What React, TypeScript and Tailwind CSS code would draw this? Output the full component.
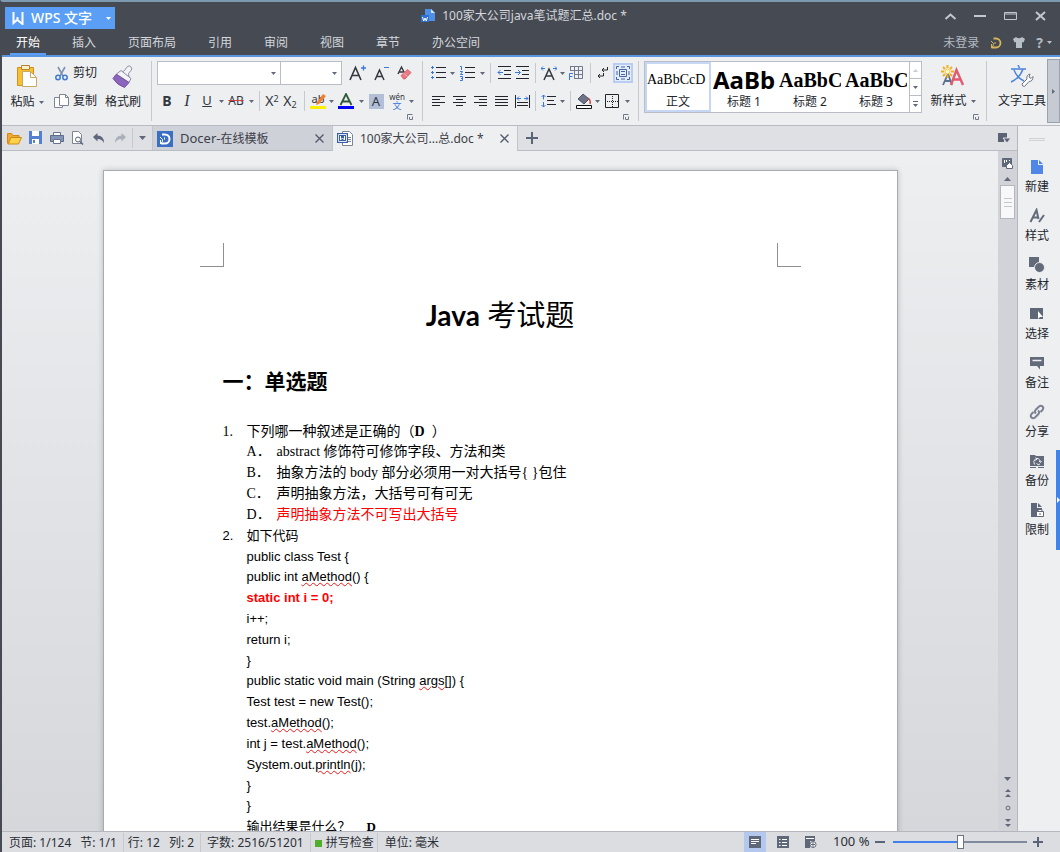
import React from 'react';
import clsx from 'clsx';

const MENU = ['开始', '插入', '页面布局', '引用', '审阅', '视图', '章节', '办公空间'];

const STYLES = [
    { label: '正文', sample: 'AaBbCcD', className: 'font-["Liberation_Serif",serif] text-sm' },
    { label: '标题 1', sample: 'AaBb', className: 'font-["Noto_Sans",sans-serif] text-2xl leading-none font-bold' },
    { label: '标题 2', sample: 'AaBbC', className: 'font-["Liberation_Serif",serif] text-xl leading-none font-bold' },
    { label: '标题 3', sample: 'AaBbC', className: 'font-["Liberation_Serif",serif] text-xl leading-none font-bold' },
];

const OPTIONS = [
    { key: 'A', text: 'abstract 修饰符可修饰字段、方法和类' },
    { key: 'B', text: '抽象方法的 body 部分必须用一对大括号{ }包住' },
    { key: 'C', text: '声明抽象方法，大括号可有可无' },
    { key: 'D', text: '声明抽象方法不可写出大括号', answer: true },
];

const Caret = ({ className = 'text-[#60687a]' }: { className?: string }) => (
    <svg className={clsx('shrink-0', className)} width="5" height="3" viewBox="0 0 5 3" fill="currentColor">
        <path d="M0 0h5L2.5 3z" />
    </svg>
);

const Svg = ({ w = 16, h = 16, children }: { w?: number; h?: number; children: React.ReactNode }) => (
    <svg className="shrink-0" width={w} height={h} viewBox={`0 0 ${w} ${h}`} fill="none" stroke="#3c4048">
        {children}
    </svg>
);

type ToolProps = { label: string; width?: string; children: React.ReactNode };

const Tool = ({ label, width = 'w-[18px]', children }: ToolProps) => (
    <button aria-label={label} className={clsx('flex h-6 shrink-0 items-center justify-center', width)}>
        {children}
    </button>
);

const More = ({ label }: { label: string }) => (
    <button aria-label={`${label}选项`} className="flex h-6 w-2 shrink-0 items-center justify-center">
        <Caret />
    </button>
);

const Sep = ({ className = 'mx-1' }: { className?: string }) => (
    <div className={clsx('h-5 w-px shrink-0 bg-[#c6c9cf]', className)} />
);

const GroupSep = () => <div className="mt-1 h-[60px] w-px shrink-0 bg-[#c6c9cf]" />;

const Launcher = ({ label }: { label: string }) => (
    <button aria-label={label} className="flex h-2 w-2 items-center justify-center self-end">
        <Svg w={6} h={6}>
            <path d="M.5 5.5v-5h5M2.5 3v2.5H5.5V2.5" stroke="#70788a" />
        </Svg>
    </button>
);

const Squiggle = ({ children }: { children: React.ReactNode }) => (
    <span className="underline decoration-[#f01818] decoration-wavy decoration-1 underline-offset-1">{children}</span>
);

/* horizontal text lines: [x1, x2] per row */
const Lines = ({ rows, step = 4, top = 2 }: { rows: number[][]; step?: number; top?: number }) => (
    <>
        {rows.map(([a, b], i) => (
            <path key={i} d={`M${a} ${top + i * step + 0.5}H${b}`} stroke="#22262c" />
        ))}
    </>
);

const Header = () => (
    <header className="border-b-2 border-[#5a95e0] bg-[#464a52] text-[#d4d7dc]">
        <div className="grid h-7 grid-cols-[1fr_auto_1fr] items-center">
            <div className="flex items-center pl-[3px] pt-1">
                <button className="flex h-[22px] w-[110px] items-center bg-[#5a9ff5] pl-[7px] font-medium text-white">
                    <Svg w={12} h={13}>
                        <path d="M1.5 0V11L5.5 7.5V5M5.5 8L10.5 12V0" stroke="#fff" strokeWidth="2" />
                    </Svg>
                    <span className="ml-[7px] text-sm">WPS 文字</span>
                    <span className="ml-auto mr-1"><Caret className="text-white" /></span>
                </button>
            </div>
            <div className="mr-3.5 flex items-center gap-[7px]">
                <Svg w={14} h={14}>
                    <path d="M4 0h6l4 4v8H4z" fill="#4e8fe8" stroke="none" />
                    <path d="M10 0l4 4h-4z" fill="#cfe2ff" stroke="none" />
                    <path d="M0 6h8v7H0z" fill="#2f6fd0" stroke="none" />
                    <path d="M1.5 8l1.2 4L4 9l1.3 3 1.2-4" stroke="#fff" />
                </Svg>
                <h1 className="text-xs">100家大公司java笔试题汇总.doc *</h1>
            </div>
            <div className="flex items-center justify-end gap-[17px] pr-[13px]">
                <button aria-label="收起"><Svg w={13} h={13}><path d="M1.5 9L6.5 4.5L11.5 9" stroke="#c3c8cf" strokeWidth="2" /></Svg></button>
                <button aria-label="最小化"><Svg w={13} h={13}><path d="M0 6h12" stroke="#c3c8cf" strokeWidth="2" /></Svg></button>
                <button aria-label="最大化"><Svg w={13} h={13}><path d="M.5 2.5h12v7H.5zM0 4h13" stroke="#c3c8cf" /></Svg></button>
                <button aria-label="关闭"><Svg w={13} h={13}><path d="M2 2l9 8M11 2L2 10" stroke="#c3c8cf" strokeWidth="2" /></Svg></button>
            </div>
        </div>
        <div className="flex h-[25px] items-stretch justify-between pl-[14px] pr-2 text-xs">
            <nav className="flex gap-8">
                {MENU.map((item, i) => (
                    <button key={item} className={clsx('relative', i === 0 && 'text-white')}>
                        {item}
                        {i === 0 && <span className="absolute -inset-x-1.5 bottom-0 h-0.5 bg-[#5a9ff5]" />}
                    </button>
                ))}
            </nav>
            <div className="flex items-center gap-[11px] text-[#b4bac2]">
                <button>未登录</button>
                <button aria-label="稻壳"><Svg w={12} h={12}>
                    <path d="M3.500 1.500H6a4.500 4.500 0 010 9H1.500" stroke="#d8b45a" strokeWidth="1.8" />
                    <path d="M1 4l2.500 2.500L3 9L1 11M1.500 7v3M5 5v2" stroke="#d8b45a" />
                </Svg></button>
                <button aria-label="皮肤"><Svg w={12} h={11}>
                    <path d="M0 2l3-2q3 2.5 6 0l3 2-1.500 3.500-1.500-.5v6H3V5l-1.500.5z" fill="#b9bfc6" stroke="none" />
                </Svg></button>
                <button aria-label="帮助" className="flex items-center gap-1 text-sm font-bold">?<Caret className="text-[#b9bfc6]" /></button>
            </div>
        </div>
    </header>
);

const Clipboard = () => (
    <div className="flex w-[149px] shrink-0 pl-1">
        <button className="flex w-[42px] flex-col items-center pt-[7px]">
            <Svg w={22} h={24}>
                <path d="M1.500 3.500h16v18h-16z" fill="#f6c02f" stroke="#d09020" />
                <path d="M5.500 1.500h8v4h-8z" fill="#fff0c0" stroke="#b38236" />
                <path d="M6.500 7.500h8l6 6v9h-14z" fill="#fff" stroke="#c9a860" />
                <path d="M14.500 7.500v6h6" stroke="#c9a860" />
            </Svg>
            <span className="mt-1.5 flex items-center gap-1 leading-4">粘贴<Caret /></span>
        </button>
        <div className="ml-1.5 flex w-11 flex-col gap-1 pt-1">
            <button className="flex h-6 items-center gap-1">
                <Svg w={15} h={15}>
                    <path d="M4 1l5 9M11 1L6 10" stroke="#7d92b4" strokeWidth="1.6" />
                    <circle cx="4" cy="11.500" r="2.200" stroke="#3c7bd0" strokeWidth="1.500" />
                    <circle cx="11" cy="11.500" r="2.200" stroke="#3c7bd0" strokeWidth="1.500" />
                </Svg>
                <span className="shrink-0">剪切</span>
            </button>
            <button className="flex h-6 items-center gap-1">
                <Svg w={15} h={15}>
                    <path d="M.500 3.500h8v10h-8z" fill="#fff" stroke="#7d8494" />
                    <path d="M5.500.500h6l3 3v8h-9z" fill="#fff" stroke="#7d8494" />
                    <path d="M11.500.500v3h3" stroke="#7d8494" />
                </Svg>
                <span className="shrink-0">复制</span>
            </button>
        </div>
        <button className="flex w-[50px] flex-col items-center pt-2">
            <Svg w={22} h={23}>
                <path d="M10 7l2.500-1.500 3-4q2-1.500 3.500.500t0 3.500l-2.500 3 .500 4z" fill="#f4f4f8" stroke="#8d8fa0" />
                <path d="M4.500 9l4.500-3.500 10 8-2 4z" fill="#f4f4f8" stroke="#8f88a8" />
                <path d="M4 9.500l13 8-4.500 5Q5 20 1 13.500z" fill="#8c66bc" stroke="#7450a4" />
            </Svg>
            <span className="mt-1.5 whitespace-nowrap leading-4">格式刷</span>
        </button>
    </div>
);

const FontGroup = () => (
    <div className="flex w-[270px] shrink-0 flex-col pl-[5px] pr-2 pt-1">
        <div className="flex h-6 items-center">
            <div className="relative h-6 w-[124px] shrink-0 border border-[#b9bdc6] bg-white">
                <select aria-label="字体" className="h-full w-full appearance-none"><option></option></select>
                <span className="pointer-events-none absolute right-1 top-2.5"><Caret /></span>
            </div>
            <div className="relative mr-1 h-6 w-[61px] shrink-0 border border-l-0 border-[#b9bdc6] bg-white">
                <select aria-label="字号" className="h-full w-full appearance-none"><option></option></select>
                <span className="pointer-events-none absolute right-1 top-2.5"><Caret /></span>
            </div>
            <Tool label="增大字号" width="w-6"><Svg w={18} h={18}>
                <path d="M1 16L6.500 3.500L12 16M3 11.500h7" stroke="#33373e" strokeWidth="1.600" />
                <path d="M12 4h5M14.500 1.500v5" stroke="#3b78dc" strokeWidth="1.300" />
            </Svg></Tool>
            <Tool label="减小字号" width="w-6"><Svg w={16} h={18}>
                <path d="M1 16L5.500 6L10 16M2.500 12.500h6" stroke="#33373e" strokeWidth="1.500" />
                <path d="M10 3.500h5" stroke="#3b78dc" />
            </Svg></Tool>
            <Tool label="清除格式" width="w-5"><Svg w={15} h={16}>
                <path d="M1 9L4.500 2L8 9M2 7h5" stroke="#33373e" strokeWidth="1.400" />
                <path d="M4 10.500l6.500-6 3.500 3-6 6.500h-1.500z" fill="#e87882" stroke="#dc6670" />
                <path d="M6.500 8l4 3.500" stroke="#f4b4ba" />
            </Svg></Tool>
        </div>
        <div className="mt-1 flex h-6 items-center text-[#33373e]">
            <Tool label="加粗" width="w-5"><b className="text-sm">B</b></Tool>
            <Tool label="倾斜" width="w-5"><i className="font-['Liberation_Serif',serif] text-base">I</i></Tool>
            <Tool label="下划线" width="w-5"><span className="text-[13px] underline">U</span></Tool>
            <More label="下划线" />
            <Tool label="删除线" width="w-[22px]"><span className="text-xs line-through decoration-[#d04040] decoration-1">AB</span></Tool>
            <More label="删除线" />
            <Sep />
            <Tool label="上标" width="w-4"><span className="text-sm">X<sup className="text-[9px]">2</sup></span></Tool>
            <Tool label="下标" width="w-5"><span className="text-sm">X<sub className="text-[9px]">2</sub></span></Tool>
            <Sep />
            <Tool label="突出显示"><span className="relative">
                <span className="block h-4 w-4 border-b-[3px] border-[#ffee00] text-[11px] leading-3">ab</span>
                <svg className="absolute left-1 top-0" width="12" height="13" viewBox="0 0 12 13">
                    <path d="M9 1l3 2-7 8-3 1 1-3z" fill="#f08030" />
                </svg>
            </span></Tool>
            <More label="突出显示" />
            <Tool label="字体颜色" width="w-[22px]"><Svg w={16} h={16}>
                <path d="M2.500 12L8 1L13.500 12M4.500 8.500h7" stroke="#2f5a3a" strokeWidth="1.800" />
                <path d="M0 14.500h16" stroke="#0000ff" strokeWidth="3" />
            </Svg></Tool>
            <More label="字体颜色" />
            <Tool label="字符底纹" width="w-[22px]"><span className="h-[15px] w-[15px] bg-[#b3bfd6] text-[13px] leading-[15px]">A</span></Tool>
            <Tool label="拼音指南" width="w-5">
                <span className="flex flex-col items-center">
                    <span className="text-[8px] leading-[8px]">wén</span>
                    <span className="text-[9px] leading-[9px] text-[#3b78dc]">文</span>
                </span>
            </Tool>
            <More label="拼音指南" />
        </div>
        <Launcher label="字体设置" />
    </div>
);

const ParagraphGroup = () => (
    <div className="flex w-[215px] shrink-0 flex-col pl-[5px] pr-2 pt-1">
        <div className="flex h-6 items-center">
            <Tool label="项目符号" width="w-5"><Svg w={15} h={14}>
                <Lines rows={[[5, 15], [5, 15], [5, 15]]} step={5} top={1} />
                <path d="M0 1.500h3M0 6.500h3M0 11.500h3M1.500 0v3M1.500 5v3M1.500 10v3" stroke="#3b78dc" />
            </Svg></Tool>
            <More label="项目符号" />
            <Tool label="编号" width="w-[22px]"><Svg w={15} h={16}>
                <Lines rows={[[5, 15], [5, 15], [5, 15]]} step={5} top={2} />
                <path d="M0 1.500h1.500V5M0 6.500h2.500L.500 9.500h2.500M0 11.500h2.500v4H0M1 13.500h1.500" stroke="#3b78dc" />
            </Svg></Tool>
            <More label="编号" />
            <Sep />
            <Tool label="减少缩进"><Svg w={14} h={14}>
                <Lines rows={[[1, 14], [7, 14], [7, 14], [1, 14]]} top={0} />
                <path d="M6 6.500H1M3.500 4L1 6.500L3.500 9" stroke="#3b78dc" />
            </Svg></Tool>
            <Tool label="增加缩进"><Svg w={14} h={14}>
                <Lines rows={[[1, 14], [7, 14], [7, 14], [1, 14]]} top={0} />
                <path d="M0 6.500h5M3 4l2.500 2.500L3 9" stroke="#3b78dc" />
            </Svg></Tool>
            <Sep />
            <Tool label="中文版式"><Svg w={16} h={16}>
                <path d="M3 15L8 4L13 15M5 11h6" stroke="#33373e" strokeWidth="1.500" />
                <path d="M0 3.500h4M2 1.500L0 3.500L2 5.500M12 3.500h4M14 1.500l2 2l-2 2" stroke="#3b78dc" />
            </Svg></Tool>
            <More label="中文版式" />
            <Tool label="插入表格" width="w-5"><Svg w={14} h={14}>
                <path d="M1 .500h12.500v12H5M1 4.500h12.500M5 8.500h8.500M1.500 0v5M5.500 0v13M9.500 0v13" stroke="#737a8c" />
                <path d="M.500 14V7.500H4M.500 10.500h3" stroke="#3b78dc" />
            </Svg></Tool>
            <Sep />
            <Tool label="显示段落标记" width="w-4"><Svg w={12} h={14}>
                <path d="M10.500 1v3H5M7 2L5 4l2 2M6.500 7v3H1M3 8l-2 2l2 2" stroke="#22262c" />
            </Svg></Tool>
            <button aria-label="段落布局" className="ml-0.5 flex h-5 w-5 shrink-0 items-center justify-center border-2 border-[#b9cdf2] bg-[#e4ecfa]">
                <Svg w={14} h={14}>
                    <path d="M3.500 3.500h7v7h-7zM.500 3V.500H3M11 .500h2.500V3M13.500 11v2.500H11M3 13.500H.500V11M5 5.500h4M5 8.500h4M5 1h4M5 13h4M1 5v4M13 5v4" stroke="#41639f" />
                </Svg>
            </button>
        </div>
        <div className="mt-1 flex h-6 items-center">
            <Tool label="左对齐" width="w-[21px]"><Svg w={13} h={12}><Lines rows={[[0, 13], [0, 8], [0, 13], [0, 8]]} step={3} top={1} /></Svg></Tool>
            <Tool label="居中" width="w-[21px]"><Svg w={13} h={12}><Lines rows={[[0, 13], [3, 10], [0, 13], [3, 10]]} step={3} top={1} /></Svg></Tool>
            <Tool label="右对齐" width="w-[21px]"><Svg w={13} h={12}><Lines rows={[[0, 13], [5, 13], [0, 13], [5, 13]]} step={3} top={1} /></Svg></Tool>
            <Tool label="两端对齐" width="w-[21px]"><Svg w={13} h={12}><Lines rows={[[0, 13], [0, 13], [0, 13], [0, 13]]} step={3} top={1} /></Svg></Tool>
            <Tool label="分散对齐" width="w-[21px]"><Svg w={15} h={13}>
                <path d="M.500 0v13M14.500 0v13M2 7.500h11M2 10.500h11" stroke="#22262c" />
                <path d="M2 3.500h4M4 1.500L2 3.500L4 5.500M9 3.500h4M11 1.500l2 2l-2 2" stroke="#3b78dc" />
            </Svg></Tool>
            <Sep className="ml-0.5 mr-1" />
            <Tool label="行距"><Svg w={16} h={14}>
                <Lines rows={[[6, 15], [6, 13], [6, 15]]} step={4} />
                <path d="M2.500 1v4.500M.500 3l2-2l2 2M2.500 8v5M.500 11l2 2l2-2" stroke="#3b78dc" />
            </Svg></Tool>
            <More label="行距" />
            <Sep />
            <Tool label="底纹颜色"><Svg w={16} h={16}>
                <path d="M2 6l5-5 6 5-5 5z" fill="#6c7486" stroke="#4c5466" />
                <path d="M12 5q3 2 2 6" stroke="#c84848" strokeWidth="1.500" />
                <path d="M.500 12.500h15v3H.500z" fill="#fff" stroke="#111" />
            </Svg></Tool>
            <More label="底纹颜色" />
            <Tool label="边框" width="w-[22px]"><Svg w={14} h={14}>
                <path d="M.500 .500h13v13H.500z" stroke="#22262c" />
                <path d="M7.500 2v11M2 7.500h11" stroke="#22262c" strokeDasharray="1 1" />
            </Svg></Tool>
            <More label="边框" />
        </div>
        <Launcher label="段落设置" />
    </div>
);

const StyleGallery = () => (
    <div className="ml-[5px] mt-1 flex h-[52px] shrink-0 border border-[#b9bdc6] bg-white">
        {STYLES.map((style, i) => (
            <button
                key={style.label}
                className={clsx('flex w-[66px] flex-col items-center overflow-hidden border-2', i === 0 ? 'border-[#c5d7f5]' : 'border-transparent')}
            >
                <span className={clsx('flex h-[30px] w-full items-center overflow-hidden whitespace-nowrap pt-0.5 text-black', style.className)}>{style.sample}</span>
                <span className="leading-4">{style.label}</span>
            </button>
        ))}
        <div className="flex w-3 flex-col divide-y divide-[#b9bdc6] border-l border-[#b9bdc6]">
            <button aria-label="向上" className="flex flex-1 items-center justify-center"><span className="rotate-180"><Caret className="text-[#c8ccd4]" /></span></button>
            <button aria-label="向下" className="flex flex-1 items-center justify-center"><Caret /></button>
            <button aria-label="全部样式" className="flex flex-1 flex-col items-center justify-center gap-0.5"><span className="h-px w-[5px] bg-[#60687a]" /><Caret /></button>
        </div>
    </div>
);

const Ribbon = () => (
    <div className="flex h-[69px] overflow-hidden border-b border-[#b9bcc4] bg-[#eeeff1] text-xs">
        <Clipboard />
        <GroupSep />
        <FontGroup />
        <GroupSep />
        <ParagraphGroup />
        <GroupSep />
        <StyleGallery />
        <div className="flex w-[64px] shrink-0 flex-col pl-1 pr-1.5 pt-2">
            <button className="flex flex-col items-center">
                <Svg w={24} h={22}>
                    <path d="M2 20L7 9L11 20M4 16h6" stroke="#5a7090" strokeWidth="1.800" />
                    <path d="M10 20L15.500 5L22 20M12.500 14.500h7" stroke="#e25a70" strokeWidth="2.400" />
                    <path d="M6.500 0v3M6.500 10v3M0 6.500h3M10 6.500h3M2 2l2 2M9 9l2 2M11 2L9 4M2 11l2-2" stroke="#f2b01e" strokeWidth="2" />
                    <circle cx="6.500" cy="6.500" r="2.500" fill="#fff6c0" stroke="#f2c84a" />
                </Svg>
                <span className="mt-1.5 flex items-center gap-1 whitespace-nowrap leading-4">新样式<Caret /></span>
            </button>
            <span className="mt-1 flex justify-end"><Launcher label="样式设置" /></span>
        </div>
        <GroupSep />
        <div className="flex min-w-0 flex-1 justify-end overflow-hidden pr-px pt-2">
            <button className="flex flex-col items-center">
                <Svg w={24} h={22}>
                    <path d="M8 0l1.500 3M1 4h15M13 4Q10 13 1 17M4 5q3 8 10 11" stroke="#4a84dc" strokeWidth="1.500" />
                    <path d="M12 19l5-5q-1-4 3-5l-1 3 2 1.500 2-2q0 5-4 5l-4.500 5q-2.500 0-2.500-2.500z" fill="#fff" stroke="#6c7486" />
                </Svg>
                <span className="mt-1.5 whitespace-nowrap leading-4">文字工具</span>
            </button>
        </div>
        <button aria-label="更多" className="my-0.5 flex w-[13px] shrink-0 items-center justify-center border border-[#9ba1ad] bg-[#c6cad3]">
            <span className="-rotate-90"><Caret /></span>
        </button>
    </div>
);

const QuickAccess = () => (
    <div className="flex w-[150px] shrink-0 items-center pl-0.5">
        <Tool label="打开" width="w-[21px]"><Svg w={15} h={13}>
            <path d="M.500 11.500V1.500h4l1.500 2h6v2" fill="#f0a830" stroke="#cf8a14" />
            <path d="M1 12l3-6.500h10.500l-3 6.500z" fill="#ffd24a" stroke="#cf8a14" />
        </Svg></Tool>
        <Tool label="保存" width="w-[21px]"><Svg w={14} h={14}>
            <path d="M0 0h13v13H0z" fill="#5580d0" stroke="none" />
            <path d="M3 0h7v5H3zM3 8h7v5H3z" fill="#fff" stroke="none" />
            <path d="M4 9h2v3H4z" fill="#5580d0" stroke="none" />
        </Svg></Tool>
        <Tool label="打印" width="w-[21px]"><Svg w={14} h={14}>
            <path d="M3.500 4V1.500h7V4" fill="#fff" stroke="#68728a" />
            <path d="M.500 4.500h13v6H.500z" fill="#8494b8" stroke="#5f6c8c" />
            <path d="M3.500 8.500h7v4h-7z" fill="#fff" stroke="#68728a" />
        </Svg></Tool>
        <Tool label="打印预览" width="w-[21px]"><Svg w={13} h={14}>
            <path d="M1.500 .500h6l3 3v9h-9z" fill="#fff" stroke="#7d8494" />
            <circle cx="7" cy="8.500" r="2.500" fill="#fff" stroke="#5a6478" />
            <path d="M9 10.500l3 3" stroke="#5a6478" strokeWidth="1.500" />
        </Svg></Tool>
        <Tool label="撤销" width="w-[21px]"><Svg w={12} h={11}>
            <path d="M0 4l4.500-4v2.500Q11 2.500 11 10 9 6 4.500 6v2.500z" fill="#5d667c" stroke="none" />
        </Svg></Tool>
        <Tool label="恢复" width="w-[21px]"><Svg w={12} h={11}>
            <path d="M12 4L7.500 0v2.500Q1 2.500 1 10 3 6 7.500 6v2.500z" fill="#aab0ba" stroke="none" />
        </Svg></Tool>
        <Sep className="ml-0.5" />
        <button aria-label="自定义" className="flex flex-1 justify-center">
            <Svg w={7} h={4}><path d="M0 0h7L3.500 4z" fill="#60687a" stroke="none" /></Svg>
        </button>
    </div>
);

const CloseTab = ({ name }: { name: string }) => (
    <button aria-label={`关闭 ${name}`} className="ml-auto">
        <Svg w={9} h={9}><path d="M.500 .500l8 8M8.500 .500l-8 8" stroke="#50586a" strokeWidth="1.300" /></Svg>
    </button>
);

const TabBar = () => (
    <div className="flex h-[25px] items-stretch border-b border-[#b9bcc4] bg-[#dfe0e4] text-xs text-[#3c4048]">
        <QuickAccess />
        <div className="flex w-[181px] items-center border-x border-[#c2c5cc] bg-[#cfd1d9] pl-1 pr-2 pt-px">
            <Svg w={16} h={16}>
                <path d="M0 0h16v16H0z" fill="#3a6fc4" stroke="none" />
                <path d="M5 3.500h3a4.500 4.500 0 010 9H4" stroke="#fff" strokeWidth="2" />
                <path d="M3 6l2.500 2.500v2L3 13M3.500 9v3M7.500 6.500v2" stroke="#fff" />
            </Svg>
            <button className="ml-[7px] text-[13px]">Docer-<span className="text-xs">在线模板</span></button>
            <CloseTab name="Docer" />
        </div>
        <div className="-mb-px flex w-[185px] items-center border-r border-[#c2c5cc] bg-[#eeeff1] pl-1 pr-2">
            <Svg w={16} h={15}>
                <path d="M5.500 .500h7l3 3v11h-10z" fill="#fff" stroke="#7d8494" />
                <path d="M11 6.500h3M11 8.500h3M11 10.500h3" stroke="#7d8494" />
                <path d="M0 2h11v10H0z" fill="#3a5fa8" stroke="none" />
                <path d="M1.500 3.500h8v7h-8z" stroke="#dfe8f8" />
                <path d="M3.500 5v4l2-2 2 2V5" stroke="#fff" />
            </Svg>
            <button className="ml-[7px]">100家大公司...总.doc *</button>
            <CloseTab name="100家大公司" />
        </div>
        <button aria-label="新建标签" className="w-7 pl-2">
            <Svg w={12} h={12}><path d="M0 6h12M6 0v12" stroke="#5a6478" strokeWidth="2" /></Svg>
        </button>
        <button aria-label="标签列表" className="ml-auto pr-1.5">
            <Svg w={13} h={12}>
                <path d="M0 1h9v5H6v4H0z" fill="#5a6274" stroke="none" />
                <path d="M5 6h8l-4 5z" fill="#5a6274" stroke="#dfe0e4" />
            </Svg>
        </button>
    </div>
);

const Page = () => (
    <article className="mx-auto w-[795px] max-w-full shrink-0 border border-[#a9abb2] bg-white pb-24 font-['Liberation_Serif','Noto_Sans_CJK_SC',serif] text-sm leading-[21px] text-black shadow-[0_0_6px_rgba(0,0,0,0.2)]">
        <div className="mt-[72px] flex justify-between px-24">
            <div className="h-6 w-6 border-b border-r border-[#8e9096]" />
            <div className="h-6 w-6 border-b border-l border-[#8e9096]" />
        </div>
        <div className="px-[119px]">
            <h2 className="mt-7 text-center text-[29px] leading-10">
                <span className="font-['Lato',sans-serif] text-[28px] font-bold">Java</span> 考试题
            </h2>
            <h3 className="mt-[30px] text-[21px] font-bold leading-8">一：单选题</h3>

            <ol className="mt-6">
                <li>
                    <div className="flex leading-5"><span className="w-6">1.</span>下列哪一种叙述是正确的（<b>D</b>&nbsp;&nbsp;）</div>
                    <ol className="pl-6">
                        {OPTIONS.map((option, i) => (
                            <li key={option.key} className={clsx('flex', i === 0 && 'leading-5')}>
                                <span className="w-[30px]">{option.key}．</span>
                                <span className={clsx(option.answer && 'text-[#ff0000]')}>{option.text}</span>
                            </li>
                        ))}
                    </ol>
                </li>
                <li className="font-['Liberation_Sans','Noto_Sans_CJK_SC',sans-serif] text-[13px]">
                    <div className="flex"><span className="w-6">2.</span>如下代码</div>
                    <div className="pl-6">
                        <p>public class Test {'{'}</p>
                        <p className="leading-5">public int <Squiggle>aMethod</Squiggle>() {'{'}</p>
                        <p className="font-bold text-[#ff0000]">static int i = 0;</p>
                        <p>i++;</p>
                        <p>return i;</p>
                        <p>{'}'}</p>
                        <p className="leading-5">public static void main (String <Squiggle>args</Squiggle>[]) {'{'}</p>
                        <p>Test test = new Test();</p>
                        <p>test.<Squiggle>aMethod</Squiggle>();</p>
                        <p>int j = test.<Squiggle>aMethod</Squiggle>();</p>
                        <p>System.out.<Squiggle>println</Squiggle>(j);</p>
                        <p>{'}'}</p>
                        <p className="leading-5">{'}'}</p>
                        <p>输出结果是什么？<b className="ml-4 font-['Liberation_Serif',serif]">D</b></p>
                    </div>
                </li>
            </ol>
        </div>
    </article>
);

const ScrollBar = () => (
    <div className="flex w-[19px] shrink-0 flex-col items-center bg-[#d2d3d8] pb-1 pt-[7px]">
        <button aria-label="导航"><Svg w={11} h={11}>
            <path d="M.500 .500h9v8h-9z" fill="#5f6878" stroke="#5f6878" />
            <path d="M2.500 2v3M4.500 2v2M7.500 2v1" stroke="#fff" />
            <path d="M4.500 10.500v-3l3-3 3 3v3z" fill="#fff" stroke="#5f6878" />
        </Svg></button>
        <button aria-label="向上滚动" className="mt-2 rotate-180"><Svg w={7} h={4}><path d="M0 0h7L3.500 4z" fill="#60687a" stroke="none" /></Svg></button>
        <div className="mt-1 flex h-[34px] w-[15px] flex-col items-center justify-center gap-[3px] border border-[#b4b7be] bg-[#f8f8fa]">
            <span className="h-px w-2 bg-[#c4c6cc]" />
            <span className="h-px w-2 bg-[#c4c6cc]" />
            <span className="h-px w-2 bg-[#c4c6cc]" />
        </div>
        <div className="mt-auto flex flex-col items-center gap-2">
            <button aria-label="向下滚动"><Svg w={7} h={4}><path d="M0 0h7L3.500 4z" fill="#60687a" stroke="none" /></Svg></button>
            <button aria-label="上一页"><Svg w={6} h={8}><path d="M0 3h6L3 0zM0 8h6L3 5z" fill="#60687a" stroke="none" /></Svg></button>
            <button aria-label="选择浏览对象"><Svg w={6} h={6}><circle cx="3" cy="3" r="2" stroke="#60687a" /></Svg></button>
            <button aria-label="下一页"><Svg w={6} h={8}><path d="M0 0h6L3 3zM0 5h6L3 8z" fill="#60687a" stroke="none" /></Svg></button>
        </div>
    </div>
);

const SIDE = [
    { label: '新建', icon: <path d="M2 1h7v5h5v9H2zM10 1l4 4h-4z" fill="#4f86e8" stroke="none" /> },
    {
        label: '样式',
        icon: <><path d="M1.500 14L7.500 2L9.500 11M4 9.500h5" stroke="#636b7a" strokeWidth="2" /><path d="M15 7l-5 7" stroke="#636b7a" strokeWidth="2" /></>,
    },
    {
        label: '素材',
        icon: <><path d="M0 0h10v10H0z" fill="#636b7a" stroke="none" /><circle cx="10.500" cy="10.500" r="5" fill="#636b7a" stroke="#eeeff1" /></>,
    },
    {
        label: '选择',
        icon: <><path d="M1 2h13v11H1z" fill="#5f6878" stroke="none" /><path d="M9 5v8l2-2 3 0z" fill="#fff" stroke="none" /></>,
    },
    {
        label: '备注',
        icon: <><path d="M1 2h14v9h-4v3.500L8 11H1z" fill="#636b7a" stroke="none" /><path d="M3.500 5.500h9" stroke="#eeeff1" strokeWidth="1.500" /></>,
    },
    {
        label: '分享',
        icon: <path d="M7 9.500Q5 8 6.500 6L10 2.500Q12 1 13.500 2.500T13.500 6L11.500 8M9 6.500Q11 8 9.500 10L6 13.500Q4 15 2.500 13.500T2.500 10L4.500 8" stroke="#7a8190" strokeWidth="2" />,
    },
    {
        label: '备份',
        icon: <><path d="M1 2h5l1 1h8v10H1zM1 14h6v1H1zM9 14h6v1H9z" fill="#636b7a" stroke="none" /><path d="M5.500 11.500Q3.500 8 6.500 6T11.500 8.500M11 11Q9 12.500 7.500 10.500M6.500 4.500L8 6L6.500 7.500M12.500 8l-1 1.500L10 8" stroke="#eeeff1" /></>,
    },
    {
        label: '限制',
        icon: <><path d="M2 1h6v5h5v9H2zM9 1l4 4H9z" fill="#5f6878" stroke="none" /><path d="M7.500 9.500h7v5h-7zM9 9V7.500h4V9" fill="#fff" stroke="#5f6878" /><path d="M11 11v2" stroke="#5f6878" /></>,
    },
];

const SidePanel = () => (
    <aside className="relative flex w-[43px] shrink-0 flex-col items-center border-l border-[#b4b7be] bg-[#eeeff1] pt-3 text-xs text-[#22262c]">
        <div className="mb-[18px] mr-1 h-[3px] w-4 shrink-0 border-y border-[#cfd1d6]" />
        {SIDE.map(({ label, icon }) => (
            <button key={label} className="flex h-[49px] shrink-0 flex-col items-center pr-1">
                <Svg>{icon}</Svg>
                <span className="mt-1 leading-4">{label}</span>
            </button>
        ))}
        <button aria-label="展开面板" className="absolute right-0 top-[324px] flex h-[100px] w-1 items-center bg-[#3f84ea]">
            <Svg w={4} h={6}><path d="M1 0l3 3-3 3z" fill="#fff" stroke="none" /></Svg>
        </button>
    </aside>
);

const StatusBar = () => (
    <footer className="flex h-[21px] shrink-0 items-center justify-between border-t border-[#b4b7be] bg-[#dcdde1] pl-[7px] pr-[17px] text-xs text-[#2b2f36]">
        <div className="flex h-full items-center whitespace-nowrap pt-0.5">
            <span>页面: 1/124</span>
            <span className="ml-[9px]">节: 1/1</span>
            <Sep className="ml-1.5 mr-1" />
            <span>行: 12</span>
            <span className="ml-[9px]">列: 2</span>
            <Sep className="ml-1.5 mr-1.5" />
            <span>字数: 2516/51201</span>
            <Sep className="ml-1.5 mr-1" />
            <button className="flex items-center gap-1"><span className="h-[7px] w-[7px] bg-[#4fae2a]" />拼写检查</button>
            <Sep className="ml-[3px] mr-[7px]" />
            <span>单位: 毫米</span>
        </div>
        <div className="flex h-full items-center">
            <button aria-label="页面视图" className="flex h-full w-[22px] items-center justify-center bg-[#b4c8ee]">
                <Svg w={12} h={12}><path d="M0 0h12v12H0z" fill="#5f6878" stroke="none" /><path d="M2 3.500h8M2 5.500h8M2 7.500h5" stroke="#fff" /></Svg>
            </button>
            <button aria-label="大纲视图" className="ml-[11px]">
                <Svg w={12} h={12}><path d="M0 0h12v12H0z" fill="#5f6878" stroke="none" /><path d="M2 3.500h1.500M5 3.500h5M2 6.500h1.500M5 6.500h5M2 9.500h1.500M5 9.500h5" stroke="#fff" /></Svg>
            </button>
            <button aria-label="Web 视图" className="ml-4">
                <Svg w={12} h={12}><path d="M0 0h10v5H5v7H0z" fill="#5f6878" stroke="none" /><path d="M1 2.500h8" stroke="#fff" /><circle cx="8" cy="8.500" r="3" fill="#fff" stroke="#5f6878" /><path d="M8 6v5M6 8.500h4" stroke="#5f6878" /></Svg>
            </button>
            <span className="ml-4 w-[37px] whitespace-nowrap text-[13px]">100 %</span>
            <button aria-label="缩小" className="ml-[5px]"><Svg w={10} h={10}><path d="M0 5h10" stroke="#5a6478" strokeWidth="2" /></Svg></button>
            <input
                type="range"
                aria-label="显示比例"
                defaultValue={50}
                className="ml-2 mr-1.5 h-4 w-[134px] appearance-none bg-transparent [&::-webkit-slider-runnable-track]:h-0.5 [&::-webkit-slider-runnable-track]:bg-[linear-gradient(to_right,#3f7fee_50%,#7f8a9c_50%)] [&::-webkit-slider-thumb]:-mt-1.5 [&::-webkit-slider-thumb]:h-3.5 [&::-webkit-slider-thumb]:w-[7px] [&::-webkit-slider-thumb]:appearance-none [&::-webkit-slider-thumb]:border [&::-webkit-slider-thumb]:border-[#6c7486] [&::-webkit-slider-thumb]:bg-white"
            />
            <button aria-label="放大"><Svg w={10} h={10}><path d="M0 5h10M5 0v10" stroke="#5a6478" strokeWidth="2" /></Svg></button>
        </div>
    </footer>
);

export default function App() {
    return (
        <div className="flex h-screen flex-col overflow-hidden border-l-2 border-t-2 border-l-[#464a52] border-t-[#7d9ab0] bg-[#eeeff1] font-['Noto_Sans','Noto_Sans_CJK_SC',sans-serif] text-[#22262c]">
            <Header />
            <Ribbon />
            <div className="flex min-h-0 flex-1">
                <div className="flex min-w-0 flex-1 flex-col">
                    <TabBar />
                    <div className="flex min-h-0 flex-1">
                        <main className="flex min-w-0 flex-1 flex-col overflow-hidden bg-linear-to-b from-[#eeeff1] to-[#d6d7db] pt-[19px]">
                            <Page />
                        </main>
                        <ScrollBar />
                    </div>
                </div>
                <SidePanel />
            </div>
            <StatusBar />
        </div>
    );
}
